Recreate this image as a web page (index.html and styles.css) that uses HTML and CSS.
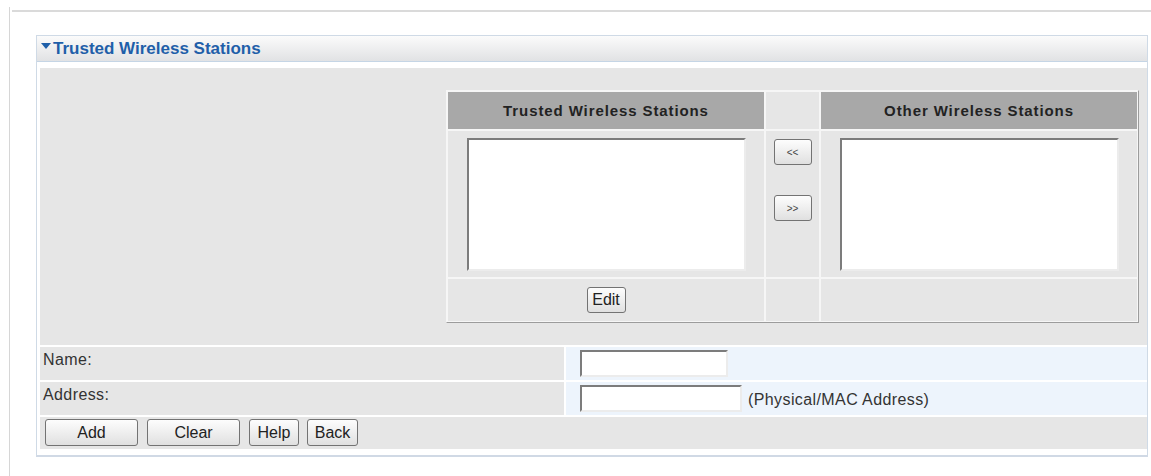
FILE: index.html
```html
<!DOCTYPE html>
<html lang="en">
<head>
    <meta charset="UTF-8">
    <meta name="viewport" content="width=device-width, initial-scale=1.0">
    <title>Trusted Wireless Stations</title>
    <link rel="stylesheet" href="styles.css">
</head>
<body>
    <div class="frame">
        <div class="frame-top">
            <div class="panel">
                <div class="panel-head">
                    <span class="arrow"></span>Trusted Wireless Stations
                </div>
                <div class="panel-body">
                    <div class="station-cell">
                        <table class="stations">
                            <tr>
                                <th class="col-list">Trusted Wireless Stations</th>
                                <th class="col-move"></th>
                                <th class="col-list">Other Wireless Stations</th>
                            </tr>
                            <tr class="list-row">
                                <td><textarea class="station-list"></textarea></td>
                                <td class="move-cell">
                                    <button class="btn btn-move">&lt;&lt;</button>
                                    <button class="btn btn-move">&gt;&gt;</button>
                                </td>
                                <td><textarea class="station-list"></textarea></td>
                            </tr>
                            <tr class="foot-row">
                                <td><button class="btn btn-edit">Edit</button></td>
                                <td></td>
                                <td></td>
                            </tr>
                        </table>
                    </div>

                    <div class="label">Name:</div>
                    <div class="value"><input type="text" class="field field-name"></div>

                    <div class="label">Address:</div>
                    <div class="value">
                        <input type="text" class="field field-addr">
                        <span class="hint">(Physical/MAC Address)</span>
                    </div>

                    <div class="actions">
                        <button class="btn btn-wide">Add</button>
                        <button class="btn btn-wide">Clear</button>
                        <button class="btn btn-small">Help</button>
                        <button class="btn btn-small">Back</button>
                    </div>
                </div>
            </div>
        </div>
    </div>
</body>
</html>
```

FILE: styles.css
```css
body {
    font-family: "Liberation Sans", Arial, sans-serif;
    margin: 0;
    padding: 0;
    background-color: #fff;
    color: #333;
}
.frame {
    margin: 7px 0 0 9px;
    border-left: 1px solid #d6d6d6;
    height: calc(100vh - 7px);
    padding-top: 3px;
}
.frame-top {
    margin-left: 2px;
    border-top: 2px solid #dadada;
    padding-top: 23px;
}
.panel {
    margin: 0 3px 0 24px;
    border: 1px solid #cfdae6;
    border-bottom: 2px solid #d0d9e5;
}
.panel-head {
    height: 25px;
    line-height: 25px;
    padding-left: 3px;
    background: linear-gradient(#fbfbfb, #e1e2e4);
    border-bottom: 1px solid #c5d5e5;
    color: #1f5fa9;
    font-weight: bold;
    font-size: 17px;
}
.arrow {
    display: inline-block;
    width: 0;
    height: 0;
    border-left: 5px solid transparent;
    border-right: 5px solid transparent;
    border-top: 6px solid #1f5fa9;
    margin: 0 2px 0 1px;
    vertical-align: 5px;
}
.panel-body {
    display: grid;
    grid-template-columns: 524px 1fr;
    gap: 2px;
    padding: 6px 0 6px 3px;
    background-color: #fff;
}
.station-cell {
    grid-column: 1 / 3;
    background-color: #e6e6e6;
    display: flex;
    justify-content: flex-end;
    padding: 22px 8px 22px 0;
}
.stations {
    border-collapse: separate;
    border-spacing: 0;
    border: 1px solid;
    border-color: #f6f6f6 #9c9c9c #9c9c9c #f6f6f6;
    height: 233px;
}
.stations th,
.stations td {
    border: 1px solid #f6f6f6;
    padding: 0;
    text-align: center;
}
.stations th {
    height: 37px;
    background-color: #a8a8a8;
    color: #222;
    font-size: 15px;
    letter-spacing: 0.9px;
}
.stations .col-move {
    background-color: #e6e6e6;
    width: 53px;
}
.col-list {
    width: 316px;
}
.list-row td {
    height: 146px;
}
.foot-row td {
    height: 42px;
}
.station-list {
    display: block;
    margin: 0 auto;
    width: 279px;
    height: 133px;
    resize: none;
    background-color: #fff;
    border: 2px solid;
    border-color: #7c7c7c #ececec #ececec #7c7c7c;
    padding: 0;
    box-sizing: border-box;
}
.move-cell {
    vertical-align: top;
}
.btn {
    font-family: "Liberation Sans", Arial, sans-serif;
    font-size: 16px;
    color: #222;
    background: linear-gradient(#fdfdfd, #e0e0e0);
    border: 1px solid #737373;
    border-radius: 3px;
    padding: 0;
    height: 27px;
    cursor: pointer;
}
.btn-move {
    display: block;
    width: 38px;
    height: 26px;
    margin: 8px auto 30px;
    font-size: 10px;
    color: #444;
}
.btn-edit {
    width: 39px;
    height: 26px;
}
.label {
    background-color: #e6e6e6;
    height: 33px;
    padding: 4px 3px 0;
    box-sizing: border-box;
    font-size: 16px;
    letter-spacing: 0.4px;
}
.value {
    background-color: #edf4fc;
    height: 33px;
    box-sizing: border-box;
    padding: 2px 0 0 14px;
    display: flex;
    align-items: center;
    align-self: start;
}
.field {
    height: 27px;
    box-sizing: border-box;
    border: 2px solid;
    border-color: #7c7c7c #ececec #ececec #7c7c7c;
    background-color: #fff;
    margin-bottom: 3px;
}
.field-name {
    width: 148px;
}
.field-addr {
    width: 162px;
}
.hint {
    margin-left: 6px;
    font-size: 16px;
    letter-spacing: 0.4px;
}
.actions {
    grid-column: 1 / 3;
    background-color: #e6e6e6;
    height: 32px;
    box-sizing: border-box;
    padding: 2px 0 0 5px;
    display: flex;
    align-items: flex-start;
    gap: 9px;
}
.btn-wide {
    width: 93px;
}
.btn-small {
    width: 50px;
}
.btn-small + .btn-small {
    margin-left: -1px;
    width: 51px;
}
```
